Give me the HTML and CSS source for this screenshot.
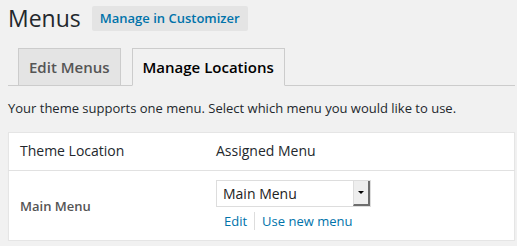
FILE: index.html
```html
<!DOCTYPE html>
<html lang="en">
<head>
  <meta charset="UTF-8">
  <title>Menus</title>
  <link rel="stylesheet" href="styles.css">
</head>
<body>
  <div class="wrap">
    <div class="title-row">
      <h1>Menus</h1>
      <a class="title-action" href="#">Manage in Customizer</a>
    </div>

    <div class="nav-tabs">
      <a class="nav-tab" href="#">Edit Menus</a>
      <a class="nav-tab active" href="#">Manage Locations</a>
    </div>

    <p class="intro">Your theme supports one menu. Select which menu you would like to use.</p>

    <table class="locations">
      <thead>
        <tr>
          <th class="col-loc">Theme Location</th>
          <th>Assigned Menu</th>
        </tr>
      </thead>
      <tbody>
        <tr>
          <td class="loc-name">Main Menu</td>
          <td>
            <div class="fake-select">
              <span class="sel-text">Main Menu</span>
              <span class="sel-arrow"></span>
            </div>
            <div class="loc-links">
              <a href="#">Edit</a>
              <span class="sep"></span>
              <a href="#">Use new menu</a>
            </div>
          </td>
        </tr>
      </tbody>
    </table>
  </div>
</body>
</html>
```

FILE: styles.css
```css
:root {
  --bg: #f1f1f1;
  --link: #0073aa;
  --border: #ccc;
  --text: #23282d;
  --muted: #555;
}

body {
  margin: 0;
  padding: 0 2px 0 8px;
  background: var(--bg);
  color: #444;
  font-family: "Open Sans", sans-serif;
  font-size: 13px;
}

.title-row {
  display: flex;
  align-items: center;
  height: 37px;
}

h1 {
  margin: 0;
  font-size: 23px;
  font-weight: 400;
  line-height: 29px;
  color: var(--text);
  padding-bottom: 1px;
}

.title-action {
  margin-left: 11px;
  padding: 3px 8px;
  background: #e4e4e4;
  border-radius: 2px;
  color: var(--link);
  font-weight: 600;
  font-size: 13px;
  line-height: 19px;
  text-decoration: none;
}

.nav-tabs {
  display: flex;
  gap: 11px;
  margin-top: 11px;
  padding-left: 10px;
  border-bottom: 1px solid var(--border);
}

.nav-tab {
  margin-bottom: -1px;
  padding: 6px 10px;
  border: 1px solid var(--border);
  background: #e4e4e4;
  color: var(--muted);
  font-size: 15px;
  font-weight: 600;
  line-height: 24px;
  text-decoration: none;
}

.nav-tab.active {
  background: var(--bg);
  border-bottom-color: var(--bg);
  color: #000;
}

.intro {
  margin: 12px 0 14px;
  line-height: 20px;
  color: var(--text);
}

.locations {
  width: 100%;
  table-layout: fixed;
  border-collapse: collapse;
  background: #fff;
  border: 1px solid #e5e5e5;
  box-shadow: 0 1px 1px rgba(0,0,0,0.04);
}

.locations th {
  padding: 8px 10px 9px 11px;
  text-align: left;
  font-size: 14px;
  font-weight: 400;
  line-height: 20px;
  color: var(--text);
  border-bottom: 1px solid #e1e1e1;
}

.locations .col-loc {
  width: 175px;
}

.locations td {
  padding: 9px 10px 9px 11px;
  vertical-align: middle;
}

.loc-name {
  font-weight: 600;
  color: var(--muted);
}

.fake-select {
  display: flex;
  width: 155px;
  height: 27px;
  border: 1px solid #ddd;
  background: #fff;
  box-sizing: border-box;
}

.sel-text {
  flex: 1;
  padding: 0 6px;
  font-size: 14px;
  line-height: 25px;
  color: #222;
}

.sel-arrow {
  position: relative;
  width: 14px;
  background: #eee;
  border-right: 2px solid #6d6d6d;
  border-bottom: 2px solid #6d6d6d;
  border-left: 1px solid #ddd;
}

.sel-arrow::after {
  content: "";
  position: absolute;
  top: 10px;
  left: 4px;
  border-left: 3px solid transparent;
  border-right: 3px solid transparent;
  border-top: 3px solid #000;
}

.loc-links {
  display: flex;
  align-items: center;
  margin-top: 4px;
  padding-left: 8px;
  line-height: 20px;
}

.loc-links a {
  color: var(--link);
  text-decoration: none;
}

.sep {
  width: 1px;
  height: 18px;
  margin: 0 7px;
  background: #ddd;
}
```
